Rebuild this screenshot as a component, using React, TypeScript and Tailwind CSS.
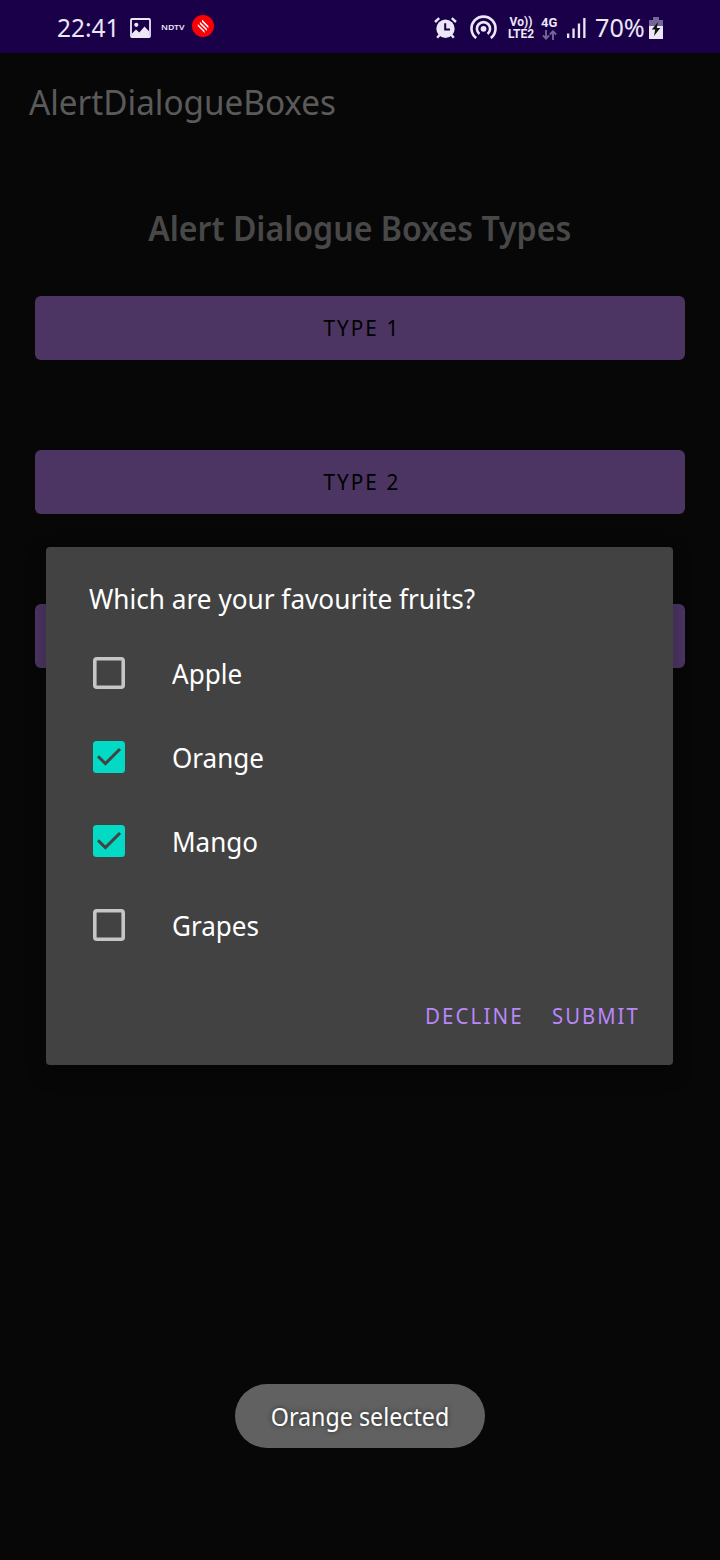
import { useState } from "react";

function PictureIcon() {
  return (
    <svg className="h-5 w-[21px]" viewBox="0 0 21 20">
      <rect x="1" y="1" width="19" height="18" rx="1" fill="none" stroke="#ece6f7" strokeWidth="1.8" />
      <circle cx="6.3" cy="6.8" r="2.1" fill="#ece6f7" />
      <path d="M2 15.5 6 11.5 9.3 14.5 14.5 8.5 19 13.3V18.5H2Z" fill="#ece6f7" />
    </svg>
  );
}

function NewsIcon() {
  return (
    <svg className="size-[22px]" viewBox="0 0 22 22">
      <circle cx="11" cy="11" r="11" fill="#fb0007" />
      <g fill="#fff">
        <path d="M10 4.6 16.4 11V13.2L10 6.8Z" />
        <path d="M7.9 6.8 15 13.9V16L7.9 8.9Z" />
        <path d="M5.8 9 12.6 15.8V17.9L5.8 11.1Z" />
      </g>
    </svg>
  );
}

function AlarmIcon() {
  return (
    <svg className="h-[22px] w-[23px]" viewBox="0 0 23 22">
      <circle cx="11.5" cy="11.8" r="9.2" fill="#ece6f7" />
      <g fill="none" stroke="#ece6f7" strokeWidth="2.4">
        <path d="M1 5 5.2 1.2M22 5 17.8 1.2M5.5 18 3.2 20.7M17.5 18 19.8 20.7" />
      </g>
      <path d="M11.2 6.2V12.4H16" fill="none" stroke="#190048" strokeWidth="2" />
    </svg>
  );
}

function HotspotIcon() {
  return (
    <svg className="h-6 w-[27px]" viewBox="0 0 27 24">
      <circle cx="13.5" cy="13.8" r="2.9" fill="#ece6f7" />
      <g fill="none" stroke="#ece6f7" strokeWidth="2.6">
        <path d="M9.4 18.9A6.6 6.6 0 1 1 17.6 18.9" />
        <path d="M6.2 23.1A12 12 0 1 1 20.8 23.1" />
      </g>
    </svg>
  );
}

function DataArrowsIcon() {
  return (
    <svg className="h-[10px] w-[15px]" viewBox="0 0 15 10">
      <path d="M4 0V8.6M.9 5.4 4 8.6 7.1 5.4M11 10V1.3M7.9 4.5 11 1.3 14.1 4.5" fill="none" stroke="#75659a" strokeWidth="1.9" />
    </svg>
  );
}

function SignalIcon() {
  return (
    <svg className="h-5 w-[19px]" viewBox="0 0 19 20">
      <g fill="#ece6f7">
        <rect x="0" y="15.5" width="2.3" height="4.5" />
        <rect x="5.4" y="10.5" width="2.3" height="9.5" />
        <rect x="10.8" y="5.5" width="2.3" height="14.5" />
        <rect x="16.2" y="0" width="2.3" height="20" />
      </g>
    </svg>
  );
}

function BatteryIcon() {
  return (
    <svg className="h-[22px] w-[14px]" viewBox="0 0 14 22">
      <path d="M4 0H10V3H14V9H0V3H4Z" fill="#75659a" />
      <rect y="9" width="14" height="13" fill="#ece6f7" />
      <path d="M9 5 2.8 12.6H6.2L5 19 11.3 11H7.8Z" fill="#111" />
    </svg>
  );
}

function Checkbox({ checked }: { checked: boolean }) {
  return (
    <svg className="size-8" viewBox="0 0 32 32">
      {checked ? (
        <>
          <rect width="32" height="32" rx="3.5" fill="#03dac5" />
          <path d="M5 15.2 12.4 22.6 27 8" fill="none" stroke="#424242" strokeWidth="3" />
        </>
      ) : (
        <rect x="1.8" y="1.8" width="28.4" height="28.4" rx="2" fill="none" stroke="#c6c6c6" strokeWidth="3.6" />
      )}
    </svg>
  );
}

function StatusBar() {
  return (
    <header className="flex h-[53px] items-start bg-[#190048] text-[#ece6f7]">
      <div className="ml-[57px] mt-[9px] w-[74px] text-[26px] leading-9">
        <span className="inline-block origin-left scale-x-[0.94]">22:41</span>
      </div>
      <div className="-ml-px mt-[18px]"><PictureIcon /></div>
      <div className="ml-[10px] mt-[23px] w-[31px] text-[7px] font-semibold leading-[10px]">
        <span className="inline-block origin-left scale-x-[1.25]">NDTV</span>
      </div>
      <div className="mt-[15px]"><NewsIcon /></div>
      <div className="ml-[220px] mt-[17px]"><AlarmIcon /></div>
      <div className="ml-[13px] mt-[15px]"><HotspotIcon /></div>
      <div className="ml-[11px] mt-[16px] w-[33px] text-center font-[Roboto] text-[12px] font-bold leading-3">
        <div className="-ml-[7px]">Vo))</div>
        <div className="-ml-[7px]">LTE2</div>
      </div>
      <div className="mt-[16px] w-[26px] font-[Roboto] text-[13px] font-bold leading-[13px]">
        <div>4G</div>
        <div className="mt-px pl-px"><DataArrowsIcon /></div>
      </div>
      <div className="mt-[18px]"><SignalIcon /></div>
      <div className="ml-[9px] mt-[9px] w-[54px] text-[26px] leading-9">
        <span className="inline-block origin-left scale-x-[0.97]">70%</span>
      </div>
      <div className="mt-[17px]"><BatteryIcon /></div>
    </header>
  );
}

function TypeButton({ label }: { label: string }) {
  return (
    <button className="flex h-16 w-full items-center justify-center rounded-md bg-[#4c3563] pb-0.5 pl-1 text-[22px] leading-8 tracking-[2.2px] text-black">
      <span className="scale-x-[0.94]">{label}</span>
    </button>
  );
}

function ChoiceDialog() {
  const [fruits, setFruits] = useState([
    { name: "Apple", checked: false },
    { name: "Orange", checked: true },
    { name: "Mango", checked: true },
    { name: "Grapes", checked: false },
  ]);
  const toggle = (name: string) =>
    setFruits(fruits.map((f) => (f.name === name ? { ...f, checked: !f.checked } : f)));

  return (
    <section className="absolute left-[46px] top-[547px] flex h-[518px] w-[627px] flex-col rounded bg-[#424242] text-[28px] leading-9 text-white shadow-[0_8px_20px_0px_rgba(0,0,0,0.3)]">
      <h2 className="ml-[43px] mt-[33px] whitespace-nowrap">
        <span className="inline-block origin-left scale-x-[0.935]">Which are your favourite fruits?</span>
      </h2>
      <ul className="mt-[15px]">
        {fruits.map((f) => (
          <li key={f.name} className="flex h-21 items-center pl-[47px]" onClick={() => toggle(f.name)}>
            <Checkbox checked={f.checked} />
            <span className="ml-[47px] origin-left scale-x-[0.93]">{f.name}</span>
          </li>
        ))}
      </ul>
      <div className="mt-[32px] flex pl-[379px] text-[22px] leading-8 tracking-[2.2px] text-[#bb86fc]">
        <button className="w-[127px] text-left"><span className="inline-block origin-left scale-x-[0.935]">DECLINE</span></button>
        <button className="text-left"><span className="inline-block origin-left scale-x-[0.92]">SUBMIT</span></button>
      </div>
    </section>
  );
}

export default function App() {
  return (
    <div className="relative flex h-[1560px] w-[720px] flex-col overflow-hidden bg-[#070707] font-['Noto_Sans',sans-serif]">
      <StatusBar />
      <div className="mt-[25px] pl-[29px] text-[35px] leading-12 text-[#5a5a5a]">
        <span className="inline-block origin-left scale-x-[0.95]">AlertDialogueBoxes</span>
      </div>
      <main className="flex flex-col px-[35px]">
        <h1 className="mt-[78px] text-center text-[35px] font-semibold leading-12 text-[#484848]">
          <span className="inline-block whitespace-nowrap scale-x-[0.917]">Alert Dialogue Boxes Types</span>
        </h1>
        <div className="mt-[44px] flex flex-col gap-[90px]">
          <TypeButton label="TYPE 1" />
          <TypeButton label="TYPE 2" />
          <TypeButton label="TYPE 3" />
        </div>
      </main>
      <ChoiceDialog />
      <div className="absolute left-[235px] top-[1384px] flex h-16 w-[250px] items-center justify-center rounded-full bg-[#616161] pr-px text-[25px] leading-8 text-white">
        <span className="whitespace-nowrap scale-x-[0.93] [text-shadow:0_0_5px_rgba(0,0,0,0.6)]">Orange selected</span>
      </div>
    </div>
  );
}
